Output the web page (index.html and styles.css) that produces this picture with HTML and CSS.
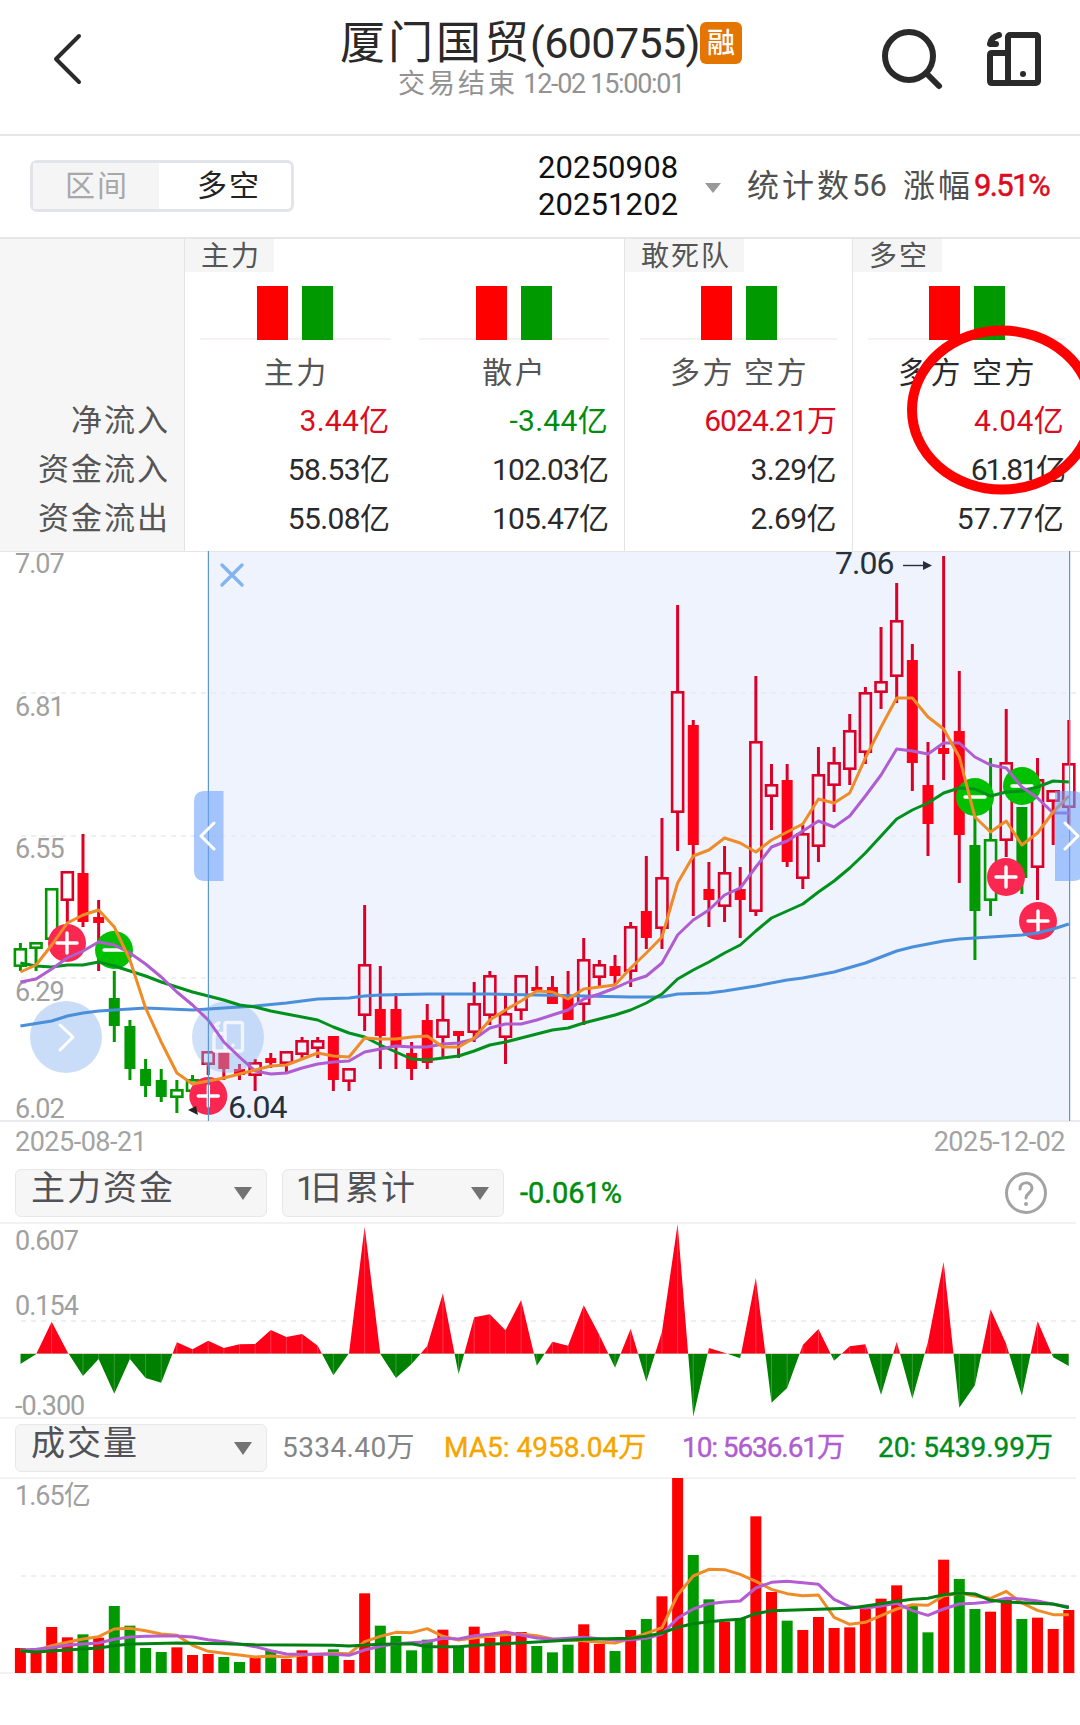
FILE: index.html
```html
<!DOCTYPE html>
<html lang="zh-CN">
<head>
  <meta charset="UTF-8" />
  <meta name="viewport" content="width=device-width, initial-scale=1.0"/>
  <title>厦门国贸(600755)</title>
  <link rel="stylesheet" href="styles.css">
</head>
<body>
  <div class="header">
    <div class="header-left">
      <svg width="30" height="52" viewBox="0 0 30 52"><path d="M27 3 4 26l23 23" fill="none" stroke="#2a2a2a" stroke-width="4" stroke-linecap="round" stroke-linejoin="round"/></svg>
    </div>
    <div class="header-title">
      <h1><span class="name">厦门国贸</span><span class="code">(600755)</span><span class="badge">融</span></h1>
      <p><span class="cn">交易结束</span> 12-02 15:00:01</p>
    </div>
    <div class="header-right">
      <svg width="64" height="64" viewBox="0 0 64 64"><g fill="none" stroke="#2a2a2a" stroke-width="6" stroke-linecap="round"><circle cx="30" cy="28" r="24"/><path d="M48 46l12 12"/></g></svg>
      <svg width="58" height="58" viewBox="0 0 58 58"><g fill="none" stroke="#2a2a2a" stroke-width="6" stroke-linejoin="round" stroke-linecap="round"><rect x="23" y="5" width="30" height="48" rx="2"/><path d="M23 23H7q-2 0-2 2v26q0 2 2 2h16M14 5Q6 7 5 14h6"/></g><circle cx="38" cy="44" r="3" fill="#2a2a2a"/></svg>
    </div>
  </div>

  <div class="filter-bar">
    <div class="toggle"><span class="off">区间</span><span class="on">多空</span></div>
    <div class="dates"><span>20250908</span><span>20251202</span></div>
    <i class="caret small"></i>
    <div class="stat"><span class="cn">统计数</span><b>56</b></div>
    <div class="stat change"><span class="cn">涨幅</span><b class="red">9.51%</b></div>
  </div>

  <div class="flow-table">
    <div class="col labels">
      <span>净流入</span><span>资金流入</span><span>资金流出</span>
    </div>
    <div class="group main-group">
      <div class="tag">主力</div>
      <div class="cols">
        <div class="col">
          <div class="bars"><i></i><i></i></div>
          <div class="label">主力</div>
          <span class="red">3.44亿</span><span>58.53亿</span><span>55.08亿</span>
        </div>
        <div class="col">
          <div class="bars"><i></i><i></i></div>
          <div class="label">散户</div>
          <span class="green">-3.44亿</span><span class="tight">102.03亿</span><span class="tight">105.47亿</span>
        </div>
      </div>
    </div>
    <div class="group">
      <div class="tag">敢死队</div>
      <div class="cols">
        <div class="col">
          <div class="bars"><i></i><i></i></div>
          <div class="label">多方 空方</div>
          <span class="red tight">6024.21万</span><span>3.29亿</span><span>2.69亿</span>
        </div>
      </div>
    </div>
    <div class="group">
      <div class="tag">多空</div>
      <div class="cols">
        <div class="col">
          <div class="bars"><i></i><i></i></div>
          <div class="label dark">多方 空方</div>
          <span class="red">4.04亿</span><span class="tighter">61.81亿</span><span class="loose">57.77亿</span>
        </div>
      </div>
    </div>
    <svg class="circle-mark" width="190" height="176" viewBox="0 0 190 176"><ellipse cx="99" cy="88" rx="90" ry="79.5" fill="none" stroke="#fe0000" stroke-width="10"/></svg>
  </div>

  <svg id="kline" width="1080" height="571" viewBox="0 551 1080 571"></svg>

  <div class="date-row"><span>2025-08-21</span><span>2025-12-02</span></div>

  <div class="indicator-bar">
    <div class="select">主力资金<i class="caret"></i></div>
    <div class="select short"><span><span class="one">1</span>日累计</span><i class="caret"></i></div>
    <span class="percent">-0.061%</span>
    <span class="help"><svg width="44" height="44" viewBox="0 0 44 44"><circle cx="22" cy="22" r="19.5" fill="none" stroke="#a3a3a3" stroke-width="3"/><path d="M16 18c0-8 12-8 12-1 0 5-6 5-6 10" fill="none" stroke="#a3a3a3" stroke-width="3" stroke-linecap="round"/><circle cx="22" cy="33" r="2" fill="#a3a3a3"/></svg></span>
  </div>

  <svg id="fund" width="1080" height="197" viewBox="0 1222 1080 197"></svg>

  <div class="indicator-bar volume-bar">
    <div class="select">成交量<i class="caret"></i></div>
    <span class="v0">5334.40万</span>
    <span class="v5">MA5: 4958.04万</span>
    <span class="v10">10: 5636.61万</span>
    <span class="v20">20: 5439.99万</span>
  </div>

  <svg id="volume" width="1080" height="198" viewBox="0 1477 1080 198"></svg>

  <script src="chart.js"></script>
</body>
</html>
```
FILE: styles.css
```css
* {
  box-sizing: border-box;
}

body {
  font-family: Roboto, 'Noto Sans CJK SC', sans-serif;
  background-color: #fff;
  color: #2a2a2a;
  margin: 0;
  padding: 0;
  width: 1080px;
  height: 1725px;
  overflow: hidden;
}

svg {
  display: block;
  overflow: visible;
}

h1, p {
  margin: 0;
  font-weight: 400;
  white-space: nowrap;
}

b, i {
  font-weight: 400;
  font-style: normal;
}

.red {
  color: #dc0c20 !important;
}

.green {
  color: #008c0c !important;
}

/* header */
.header {
  display: grid;
  grid-template-columns: 300px 482px 298px;
  height: 136px;
  border-bottom: 2px solid #e6e6e8;
}

.header-left {
  padding: 33px 0 0 52px;
}

.header-title {
  display: flex;
  flex-direction: column;
  align-items: center;
}

.header-title h1 {
  display: flex;
  align-items: center;
  height: 42px;
  margin-top: 22px;
  font-size: 45px;
  line-height: 42px;
}

.name {
  letter-spacing: 3px;
  padding-top: 2px;
}

.code {
  font-size: 43px;
  letter-spacing: -0.6px;
  margin-left: -2px;
}

.badge {
  width: 42px;
  height: 42px;
  border-radius: 6px;
  background-color: #e47600;
  color: #fff;
  font-size: 28px;
  font-weight: 500;
  line-height: 44px;
  text-align: center;
}

.header-title p {
  margin-top: 4px;
  font-size: 27px;
  line-height: 33px;
  letter-spacing: -1.3px;
  color: #929292;
}

.header-title .cn {
  letter-spacing: 3px;
}

.header-right {
  display: flex;
  gap: 42px;
  padding: 28px 0 0 97px;
}

.header-right svg + svg {
  margin-top: 2px;
}

/* filter */
.filter-bar {
  display: flex;
  align-items: center;
  height: 103px;
  padding: 0 28px 2px 30px;
  border-bottom: 2px solid #e6e6e8;
}

.toggle {
  display: flex;
  width: 264px;
  height: 52px;
  border: 3px solid #e3e4ea;
  border-radius: 7px;
  font-size: 30px;
  line-height: 46px;
  letter-spacing: 2px;
}

.toggle span {
  width: 133px;
  text-align: center;
}

.toggle .off {
  width: 127px;
  padding-left: 2px;
  background-color: #f5f5f6;
  color: #a8a8a8;
}

.toggle .on {
  padding-left: 8px;
  color: #222;
}

.dates {
  display: flex;
  flex-direction: column;
  margin-left: 244px;
  width: 142px;
  font-size: 31px;
  line-height: 37px;
  letter-spacing: 0.1px;
  color: #111;
}

.caret {
  display: block;
  border: 9px solid transparent;
  border-top: 13px solid #737373;
  border-bottom: 0;
}

.caret.small {
  border-width: 10px 8px 0;
  border-top-color: #999;
  margin: 4px 26px 0 25px;
}

.stat {
  display: flex;
  align-items: center;
  font-size: 31px;
  line-height: 40px;
  color: #505050;
  white-space: nowrap;
}

.stat .cn {
  font-size: 32px;
  letter-spacing: 3px;
}

.stat.change {
  margin-left: 16px;
}

.stat.change b {
  font-size: 31px;
  letter-spacing: -1.6px;
  margin-left: 1px;
}

.stat.change b.red {
  -webkit-text-stroke: 0.5px #dc0c20;
}

/* flow table */
.flow-table {
  position: relative;
  display: grid;
  grid-template-columns: 184px 440px 228px 228px;
  height: 312px;
}

.col {
  display: flex;
  flex-direction: column;
  align-items: flex-end;
  font-size: 30px;
  line-height: 49px;
  white-space: nowrap;
}

.col > span {
  letter-spacing: -0.6px;
  margin-right: 1px;
}

.col > .red,
.col > .green {
  letter-spacing: 0.3px;
}

.col > .tight {
  letter-spacing: -0.9px;
}

.col > .tighter {
  letter-spacing: -2px;
}

.col > .loose {
  letter-spacing: 0.3px;
}

.labels {
  background-color: #f6f6f6;
  padding: 157px 13px 0 0;
}

.labels > span {
  font-size: 31px;
  letter-spacing: 2px;
  color: #555;
}

.group {
  border-left: 1px solid #e4e4e4;
}

.tag {
  display: inline-block;
  height: 33px;
  padding: 0 13px 0 16px;
  background-color: #f5f5f5;
  font-size: 28px;
  line-height: 35px;
  letter-spacing: 2px;
  color: #555;
  vertical-align: top;
}

.cols {
  display: flex;
  padding: 14px 15px 0 15px;
  gap: 28px;
}

.cols .col {
  flex: 1;
}

.bars {
  display: flex;
  justify-content: center;
  gap: 14px;
  width: 100%;
  height: 54px;
  background: linear-gradient(#f6f2f2, #f6f2f2) 0 52px / 100% 2px no-repeat;
}

.bars i {
  width: 31px;
  background-color: #fe0000;
}

.bars i + i {
  background-color: #009a00;
}

.label {
  width: 100%;
  padding-left: 2px;
  text-align: center;
  height: 56px;
  line-height: 65px;
  letter-spacing: 2.5px;
  word-spacing: -1px;
  color: #555;
}

.label.dark {
  color: #2a2a2a;
}

.circle-mark {
  position: absolute;
  left: 903px;
  top: 83px;
}

/* charts */
.date-row {
  display: flex;
  justify-content: space-between;
  height: 47px;
  padding: 2px 15px 0 15px;
  font-size: 27px;
  line-height: 36px;
  letter-spacing: -0.5px;
  color: #a3a3a3;
}

.indicator-bar {
  display: flex;
  align-items: center;
  height: 53px;
  padding: 0 32px 6px 15px;
  font-size: 28px;
}

.volume-bar {
  height: 58px;
  padding-right: 20px;
  padding-bottom: 1px;
}

.select {
  display: flex;
  flex-shrink: 0;
  justify-content: space-between;
  width: 252px;
  height: 48px;
  padding: 0 14px 0 15px;
  margin-right: 15px;
  border: 1px solid #e8e8e8;
  border-radius: 6px;
  background-color: #f6f6f7;
  color: #505257;
  font-size: 34px;
  line-height: 37px;
  letter-spacing: 2px;
}

.select .caret {
  margin-top: 17px;
}

.select.short {
  width: 222px;
}

.one {
  letter-spacing: -6px;
  margin-left: -2px;
}

.percent {
  margin-left: 1px;
  color: #008c0c;
  font-size: 29px;
  letter-spacing: 0;
  -webkit-text-stroke: 0.5px #008c0c;
}

.help {
  margin-left: auto;
}

.volume-bar > span {
  flex-shrink: 0;
  line-height: 40px;
  letter-spacing: 0.4px;
  white-space: nowrap;
}

.v0 {
  width: 162px;
  color: #858585;
}

.volume-bar > .v5 {
  width: 238px;
  color: #f5a500;
  letter-spacing: 0;
  -webkit-text-stroke: 0.4px #f5a500;
}

.volume-bar > .v10 {
  width: 196px;
  color: #af5dd0;
  letter-spacing: -1.1px;
  -webkit-text-stroke: 0.4px #af5dd0;
}

.volume-bar > .v20 {
  color: #008c1c;
  letter-spacing: 0;
  -webkit-text-stroke: 0.4px #008c1c;
}

.axis {
  font-size: 27px;
  letter-spacing: -1px;
  fill: #a0a0a0;
}

.peak {
  font-size: 32px;
  letter-spacing: -1px;
  fill: #26303c;
}

.ma {
  fill: none;
  stroke-width: 3;
  stroke-linejoin: round;
}

.grid {
  stroke: #e9eaee;
  stroke-width: 1.4;
  stroke-dasharray: 5 5;
}
```
FILE: chart.js
```js
const STEP = 15.648;
const X0 = 20.4;
const px = i => X0 + i * STEP;

const RED = "#dc0028";
const GREEN = "#009a00";

// [type, high, bodyTop, bodyBottom, low]  lower case = hollow, upper case = filled
const candles = [
  ["g",943,948,967,971],["g",942,942,949,971],["g",888,888,940,940],["r",871,871,901,922],
  ["R",834,873,922,927],["R",900,917,923,971],["G",971,998,1026,1042],["G",1020,1026,1069,1080],
  ["G",1059,1069,1086,1097],["G",1069,1080,1097,1102],["g",1080,1089,1098,1113],["g",1075,1079,1092,1092],
  ["r",1051,1051,1065,1075],["R",1050,1050,1069,1080],["R",1064,1069,1075,1080],["r",1059,1062,1076,1091],
  ["R",1053,1058,1063,1068],["r",1051,1051,1064,1074],["r",1037,1040,1055,1058],["r",1037,1040,1049,1058],
  ["R",1036,1036,1080,1091],["r",1068,1068,1082,1091],["r",905,964,1016,1031],["R",966,1009,1036,1069],
  ["R",993,1009,1047,1069],["R",1042,1053,1069,1080],["R",1004,1020,1063,1069],["r",994,1019,1038,1058],
  ["R",1031,1031,1036,1058],["r",982,1003,1033,1042],["r",971,975,1016,1025],["r",993,1013,1038,1064],
  ["r",975,975,1011,1020],["R",966,987,991,991],["R",976,987,1004,1004],["R",971,997,1020,1020],
  ["r",938,959,1005,1025],["r",960,964,978,986],["R",955,966,976,985],["r",922,926,972,987],
  ["R",856,911,938,949],["r",818,877,929,949],["r",605,691,813,851],["R",720,725,845,916],
  ["R",862,889,900,927],["r",846,872,907,922],["R",867,889,900,938],["r",676,741,912,916],
  ["r",764,784,797,830],["R",764,780,862,867],["r",825,833,879,889],["r",747,774,847,862],
  ["r",747,762,786,812],["r",714,730,770,785],["r",687,692,753,764],["r",627,681,693,709],
  ["r",583,620,677,703],["R",644,660,763,791],["R",742,785,824,856],["R",556,748,754,780],
  ["R",671,731,835,883],["G",813,845,911,960],["g",758,839,901,916],["r",709,762,841,857],
  ["G",807,807,878,894],["r",758,779,868,900],["r",790,790,802,845],["r",720,763,808,825]
];

const ma5 = [972,965,945,923,915,910,927,960,1008,1042,1073,1084,1081,1078,1074,1070,1066,1065,1059,1053,1056,1057,
  1038,1039,1039,1037,1036,1047,1047,1038,1020,1010,1001,991,992,999,989,987,985,968,953,937,883,856,850,838,
  843,852,840,832,824,799,803,793,758,727,698,698,717,729,757,817,832,821,845,833,812,796];
const ma10 = [982,979,969,958,951,942,945,953,964,977,992,1005,1020,1042,1057,1071,1074,1073,1068,1064,1062,1061,
  1052,1049,1046,1047,1047,1044,1043,1039,1028,1024,1024,1020,1015,1010,999,994,988,981,976,963,935,920,910,895,
  888,867,847,841,831,821,827,816,796,775,749,751,754,743,743,757,765,768,787,798,813,813];
const ma20 = [963,966,967,965,965,962,966,971,976,982,987,992,996,1000,1005,1007,1011,1014,1017,1020,1027,1033,
  1037,1045,1052,1059,1060,1058,1056,1051,1045,1042,1038,1034,1030,1028,1023,1019,1015,1010,1003,994,979,970,962,953,
  945,931,918,911,904,892,881,868,853,836,819,810,803,793,788,789,796,792,791,787,781,782];
// sparse [index, y]
const ma60 = [[0,1026],[2,1021],[3,1016],[4,1013],[5,1011],[6,1010],[8,1008],[11,1010],[13,1008],[15,1006],[17,1003],
  [19,999],[21,998],[22,996],[23,995],[26,994],[30,994],[33,995],[36,996],[39,997],[41,997],[42,994],[44,993],[45,991],
  [47,986],[49,980],[50,978],[51,975],[52,972],[54,963],[56,951],[57,947],[58,944],[59,941],[60,939],[62,937],[64,935],
  [65,933],[66,929],[67,924]];

const fund = [-31,-2,96,6,-67,-16,-120,-16,-73,-87,34,13,39,17,28,29,71,50,59,24,-65,1,381,-1,-73,-31,23,181,-62,
  109,118,70,161,-36,36,24,145,56,-42,75,-84,66,389,-189,17,3,-14,228,-147,-103,26,74,-21,22,28,-124,36,-135,36,
  276,-162,-95,133,29,-126,98,-11,-37];

// bar tops, measured from the top of the panel in thirds of a pixel
const volTop = [534,538,471,502,493,503,408,467,534,546,532,555,552,561,576,562,540,567,541,555,538,570,370,467,498,
  541,509,479,530,470,503,495,486,528,547,524,463,522,543,480,447,379,24,255,388,455,445,139,366,452,480,441,474,
  472,417,386,346,408,487,269,327,417,425,385,447,443,477,420];
const volColor = "RRRRGRGGGGRRRGGRGRRRGRRGGGGRGRRRRGGGRRGRGRRGGRGRRGRRRRRRRGGRGGRRGRRR";
const vma5 = [541,541,527,517,507,500,477,475,482,492,496,526,544,550,555,561,558,561,555,553,550,551,515,499,487,
  488,476,499,510,504,497,494,492,497,507,510,512,517,519,506,490,473,375,318,298,299,313,334,358,371,377,375,442,
  463,457,437,417,404,406,378,369,378,385,364,399,421,434,434];
const vma10 = [541,538,533,526,522,519,508,501,499,498,498,501,509,515,522,530,542,552,553,553,553,556,540,529,521,
  518,515,505,507,497,493,486,495,504,508,505,502,506,510,509,505,492,445,417,401,396,393,354,337,334,338,343,388,
  410,414,408,400,422,436,417,402,400,395,385,387,393,403,410];
const vma20 = [[0,542],[1,546],[2,543],[3,540],[4,537],[5,534],[6,527],[7,522],[8,521],[10,519],[13,521],[15,524],
  [20,526],[21,528],[23,523],[25,521],[26,530],[28,530],[30,523],[33,516],[36,508],[39,505],[40,499],[41,489],[42,472],
  [43,461],[44,455],[45,451],[46,448],[47,431],[48,422],[49,421],[51,418],[53,415],[54,408],[55,401],[56,394],[57,388],
  [58,385],[59,374],[60,369],[61,372],[62,391],[63,396],[64,398],[66,402],[67,413]];

const volY = v => 1470 + v / 3;

function maLine(data, color, y = v => v) {
  const pts = data.map((d, i) => Array.isArray(d) ? [px(d[0]), y(d[1])] : [px(i), y(d)]);
  return `<polyline class="ma" stroke="${color}" points="${pts.map(p => p.join(",")).join(" ")}"/>`;
}

function gridLine(y) {
  return `<line class="grid" x1="21" x2="1076" y1="${y}" y2="${y}"/>`;
}

function border(y) {
  return `<line x1="0" x2="1076" y1="${y}" y2="${y}" stroke="#f3f1f2" stroke-width="2"/>`;
}

function label(text, y) {
  return `<text class="axis" x="15" y="${y}">${text}</text>`;
}

function marker(x, y, plus) {
  const shape = plus ? "M-10 0H10M0-10V10" : "M-10 0H10";
  return `<g transform="translate(${x} ${y})"><circle r="19" fill="${plus ? "#fa2850" : "#00c000"}"/>
    <path d="${shape}" stroke="#fff" stroke-width="3.4" stroke-linecap="round"/></g>`;
}

function drawKline() {
  let s = `<rect x="208" y="551" width="862" height="570" fill="#eef3fe"/>
    <line x1="0" x2="1080" y1="551.5" y2="551.5" stroke="#e6e6e8"/>
    <line x1="0" x2="1080" y1="1121" y2="1121" stroke="#eceaf0" stroke-width="2"/>`;
  s += [693, 836, 978].map(gridLine).join("");
  s += label("7.07", 573) + label("6.81", 716) + label("6.55", 858) + label("6.29", 1001) + label("6.02", 1118);

  candles.forEach(([type, high, top, bottom, low], i) => {
    const x = px(i);
    const color = type.toLowerCase() === "r" ? RED : GREEN;
    const filled = type === type.toUpperCase();
    if (filled) {
      s += `<line x1="${x}" x2="${x}" y1="${high}" y2="${low}" stroke="${color}" stroke-width="3"/>`;
      s += `<rect x="${x - 5.5}" y="${top}" width="11" height="${bottom - top}" fill="${type === "R" ? "#ff0018" : GREEN}"/>`;
    } else {
      s += `<path d="M${x} ${high}V${top}M${x} ${bottom}V${low}" stroke="${color}" stroke-width="3"/>`;
      s += `<rect x="${x - 5.5}" y="${top + 1.3}" width="11" height="${bottom - top - 2.6}" fill="none" stroke="${color}" stroke-width="2.6"/>`;
    }
  });

  // floating buttons
  s += `<circle cx="66" cy="1037" r="36" fill="#8cb4f0" fill-opacity=".47"/><circle cx="228" cy="1037" r="36" fill="#8cb4f0" fill-opacity=".42"/>
    <path d="M60 1025l13 12-13 13" fill="none" stroke="#fff" stroke-width="3" stroke-linecap="round" stroke-linejoin="round"/>
    <g fill="none" stroke="#f1f5fe" stroke-width="3.4" stroke-linejoin="round" stroke-linecap="round"><rect x="225" y="1022.5" width="17.5" height="28.5" rx="2"/>
    <path d="M225 1033.5H215.5q-1.5 0-1.5 1.5v14.5q0 1.5 1.5 1.5h9.5M219 1023q-4 1-4 5h3M233 1045v.5"/></g>`;
  s += marker(67, 943, true) + marker(114, 950, false) + marker(208.3, 1096, true) + marker(1006, 877, true)
    + marker(1038, 921, true) + marker(975, 797, false) + marker(1022, 786, false);
  s += maLine(ma60, "#4a8fda") + maLine(ma20, "#00901c") + maLine(ma10, "#af5dd0") + maLine(ma5, "#ee8c28");

  // selection edges and drag handles
  s += `<path d="M208.4 551V1121M1069.6 551V1121" stroke="#5c98cf" stroke-width="1.2"/>
    <path d="M223.5 791V881H205q-11 0-11-11V802q0-11 11-11z" fill="#6aa0fa" fill-opacity=".58"/>
    <path d="M1055 791h18q11 0 11 11v68q0 11-11 11h-18z" fill="#6aa0fa" fill-opacity=".58"/>
    <path d="M214 823l-13 13 13 13M1065 823l13 13-13 13" fill="none" stroke="#fff" stroke-width="3" stroke-linecap="round" stroke-linejoin="round"/>
    <path d="M222 565l20 20M242 565l-20 20" stroke="#82b4ee" stroke-width="3.4" stroke-linecap="round"/>`;
  s += `<text class="peak" x="835" y="574">7.06</text><path d="M903 565.5h22" stroke="#26303c" stroke-width="1.4"/>
    <path d="M932 565.5l-9-4.5v9z" fill="#26303c"/>
    <text class="peak" x="228" y="1118">6.04</text><path d="M188 1110l8-4 2 9z" fill="#222"/>`;
  document.getElementById("kline").innerHTML = s;
}

function drawFund() {
  const zero = 1353.7;
  const pts = fund.map((v, i) => `${px(i)},${zero - v / 3}`).join(" ");
  const area = `${px(0)},${zero} ${pts} ${px(67)},${zero}`;
  let s = border(1223) + border(1418) + gridLine(1321);
  s += label("0.607", 1250) + label("0.154", 1315) + label("-0.300", 1415);
  s += `<clipPath id="up"><rect x="0" y="1200" width="1080" height="${zero - 1200}"/></clipPath>
    <clipPath id="down"><rect x="0" y="${zero}" width="1080" height="80"/></clipPath>
    <polygon points="${area}" fill="#ff0018" clip-path="url(#up)"/>
    <polygon points="${area}" fill="#008000" clip-path="url(#down)"/>`;
  fund.forEach((v, i) => {
    s += `<line x1="${px(i)}" x2="${px(i)}" y1="${zero}" y2="${zero - v / 3}" stroke="#fff" stroke-opacity=".22"/>`;
  });
  document.getElementById("fund").innerHTML = s;
}

function drawVolume() {
  let s = border(1478) + border(1673) + gridLine(1576) + label("1.65亿", 1505);
  volTop.forEach((v, i) => {
    s += `<rect x="${px(i) - 5.5}" y="${volY(v)}" width="11" height="${1673 - volY(v)}" fill="${volColor[i] === "R" ? "#fe0000" : GREEN}"/>`;
  });
  s += maLine(vma5, "#ee8c28", volY) + maLine(vma10, "#b45cd2", volY) + maLine(vma20, "#008010", volY);
  document.getElementById("volume").innerHTML = s;
}

drawKline();
drawFund();
drawVolume();
```
